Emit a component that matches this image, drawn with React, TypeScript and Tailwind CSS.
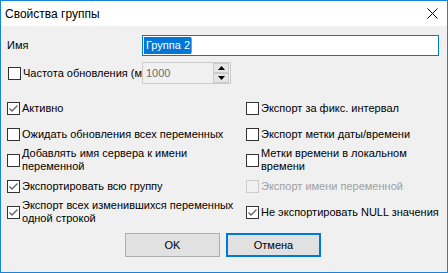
import React from 'react';

function Check({ checked, disabled }: { checked?: boolean; disabled?: boolean }) {
  return (
    <span
      className={`w-[13px] h-[13px] shrink-0 border flex items-center justify-center ${
        disabled ? 'border-[#cccccc] bg-[#f0f0f0]' : 'border-[#333333] bg-white'
      }`}
    >
      {checked && (
        <svg width="11" height="11" viewBox="0 0 11 11">
          <path d="M1.5 5.5 L4 8 L9.5 2.5" fill="none" stroke="#606060" strokeWidth="1.3" />
        </svg>
      )}
    </span>
  );
}

function Option({
  lines,
  checked,
  disabled,
}: {
  lines: string[];
  checked?: boolean;
  disabled?: boolean;
}) {
  return (
    <div className="h-[26px] flex items-center gap-[2px]">
      <Check checked={checked} disabled={disabled} />
      <span className={`leading-[13px] whitespace-nowrap ${disabled ? 'text-[#a0a0a0]' : 'text-black'}`}>
        {lines.map((l, i) => (
          <span key={i} className="block">
            {l}
          </span>
        ))}
      </span>
    </div>
  );
}

export default function App() {
  return (
    <div
      className="w-[448px] h-[273px] border border-[#1883d7] bg-[#f0f0f0] flex flex-col text-[11px] text-black overflow-hidden"
      style={{ fontFamily: '"Liberation Sans", Arial, sans-serif' }}
    >
      <div className="h-[25px] bg-white flex items-center justify-between pl-[4px] pr-[9px] shrink-0">
        <span className="text-[12px]">Свойства группы</span>
        <svg width="11" height="11" viewBox="0 0 11 11">
          <path d="M0.5 0.5 L10.5 10.5 M10.5 0.5 L0.5 10.5" stroke="#000" strokeWidth="1" />
        </svg>
      </div>

      <div className="flex flex-col pl-[6px]">
        <div className="mt-[9px] h-[21px] flex items-center">
          <span className="w-[135px]">Имя</span>
          <div className="w-[297px] h-[21px] border border-[#0078d7] bg-white flex items-center pl-[1px]">
            <span className="bg-[#0078d7] text-white h-[17px] leading-[17px] pl-[2px] pr-[1px]">Группа 2</span>
            <span className="w-[1px] h-[15px] bg-[#f08020]" />
          </div>
        </div>

        <div className="mt-[6px] h-[22px] flex items-center">
          <div className="w-[135px] flex items-center gap-[2px] overflow-hidden">
            <span className="ml-[1px]">
              <Check />
            </span>
            <span className="whitespace-nowrap">Частота обновления (мс)</span>
          </div>
          <div className="w-[89px] h-[22px] border border-[#cccccc] bg-[#f0f0f0] flex items-center justify-between pl-[3px] pr-[1px]">
            <span className="text-[#6d6d6d]">1000</span>
            <div className="flex flex-col gap-[0px]">
              <span className="w-[16px] h-[10px] border border-[#cccccc] bg-[#e5e5e5] flex items-center justify-center">
                <svg width="7" height="4" viewBox="0 0 7 4">
                  <path d="M0 4 L3.5 0 L7 4 Z" fill="#000" />
                </svg>
              </span>
              <span className="w-[16px] h-[10px] border border-[#cccccc] bg-[#e5e5e5] flex items-center justify-center">
                <svg width="7" height="4" viewBox="0 0 7 4">
                  <path d="M0 0 L7 0 L3.5 4 Z" fill="#000" />
                </svg>
              </span>
            </div>
          </div>
        </div>

        <div className="mt-[11px] grid grid-cols-[239px_1fr]">
          <div className="flex flex-col">
            <Option lines={['Активно']} checked />
            <Option lines={['Ожидать обновления всех переменных']} />
            <Option lines={['Добавлять имя сервера к имени', 'переменной']} />
            <Option lines={['Экспортировать всю группу']} checked />
            <Option lines={['Экспорт всех изменившихся переменных', 'одной строкой']} checked />
          </div>
          <div className="flex flex-col">
            <Option lines={['Экспорт за фикс. интервал']} />
            <Option lines={['Экспорт метки даты/времени']} />
            <Option lines={['Метки времени в локальном', 'времени']} />
            <Option lines={['Экспорт имени переменной']} disabled />
            <Option lines={['Не экспортировать NULL значения']} checked />
          </div>
        </div>
      </div>

      <div className="mt-[8px] flex justify-center gap-[6px] pr-[2px]">
        <button className="w-[95px] h-[24px] border border-[#adadad] bg-[#e1e1e1] text-[11px]">OK</button>
        <button className="w-[95px] h-[24px] border-2 border-[#0078d7] bg-[#e1e1e1] text-[11px]">Отмена</button>
      </div>
    </div>
  );
}
